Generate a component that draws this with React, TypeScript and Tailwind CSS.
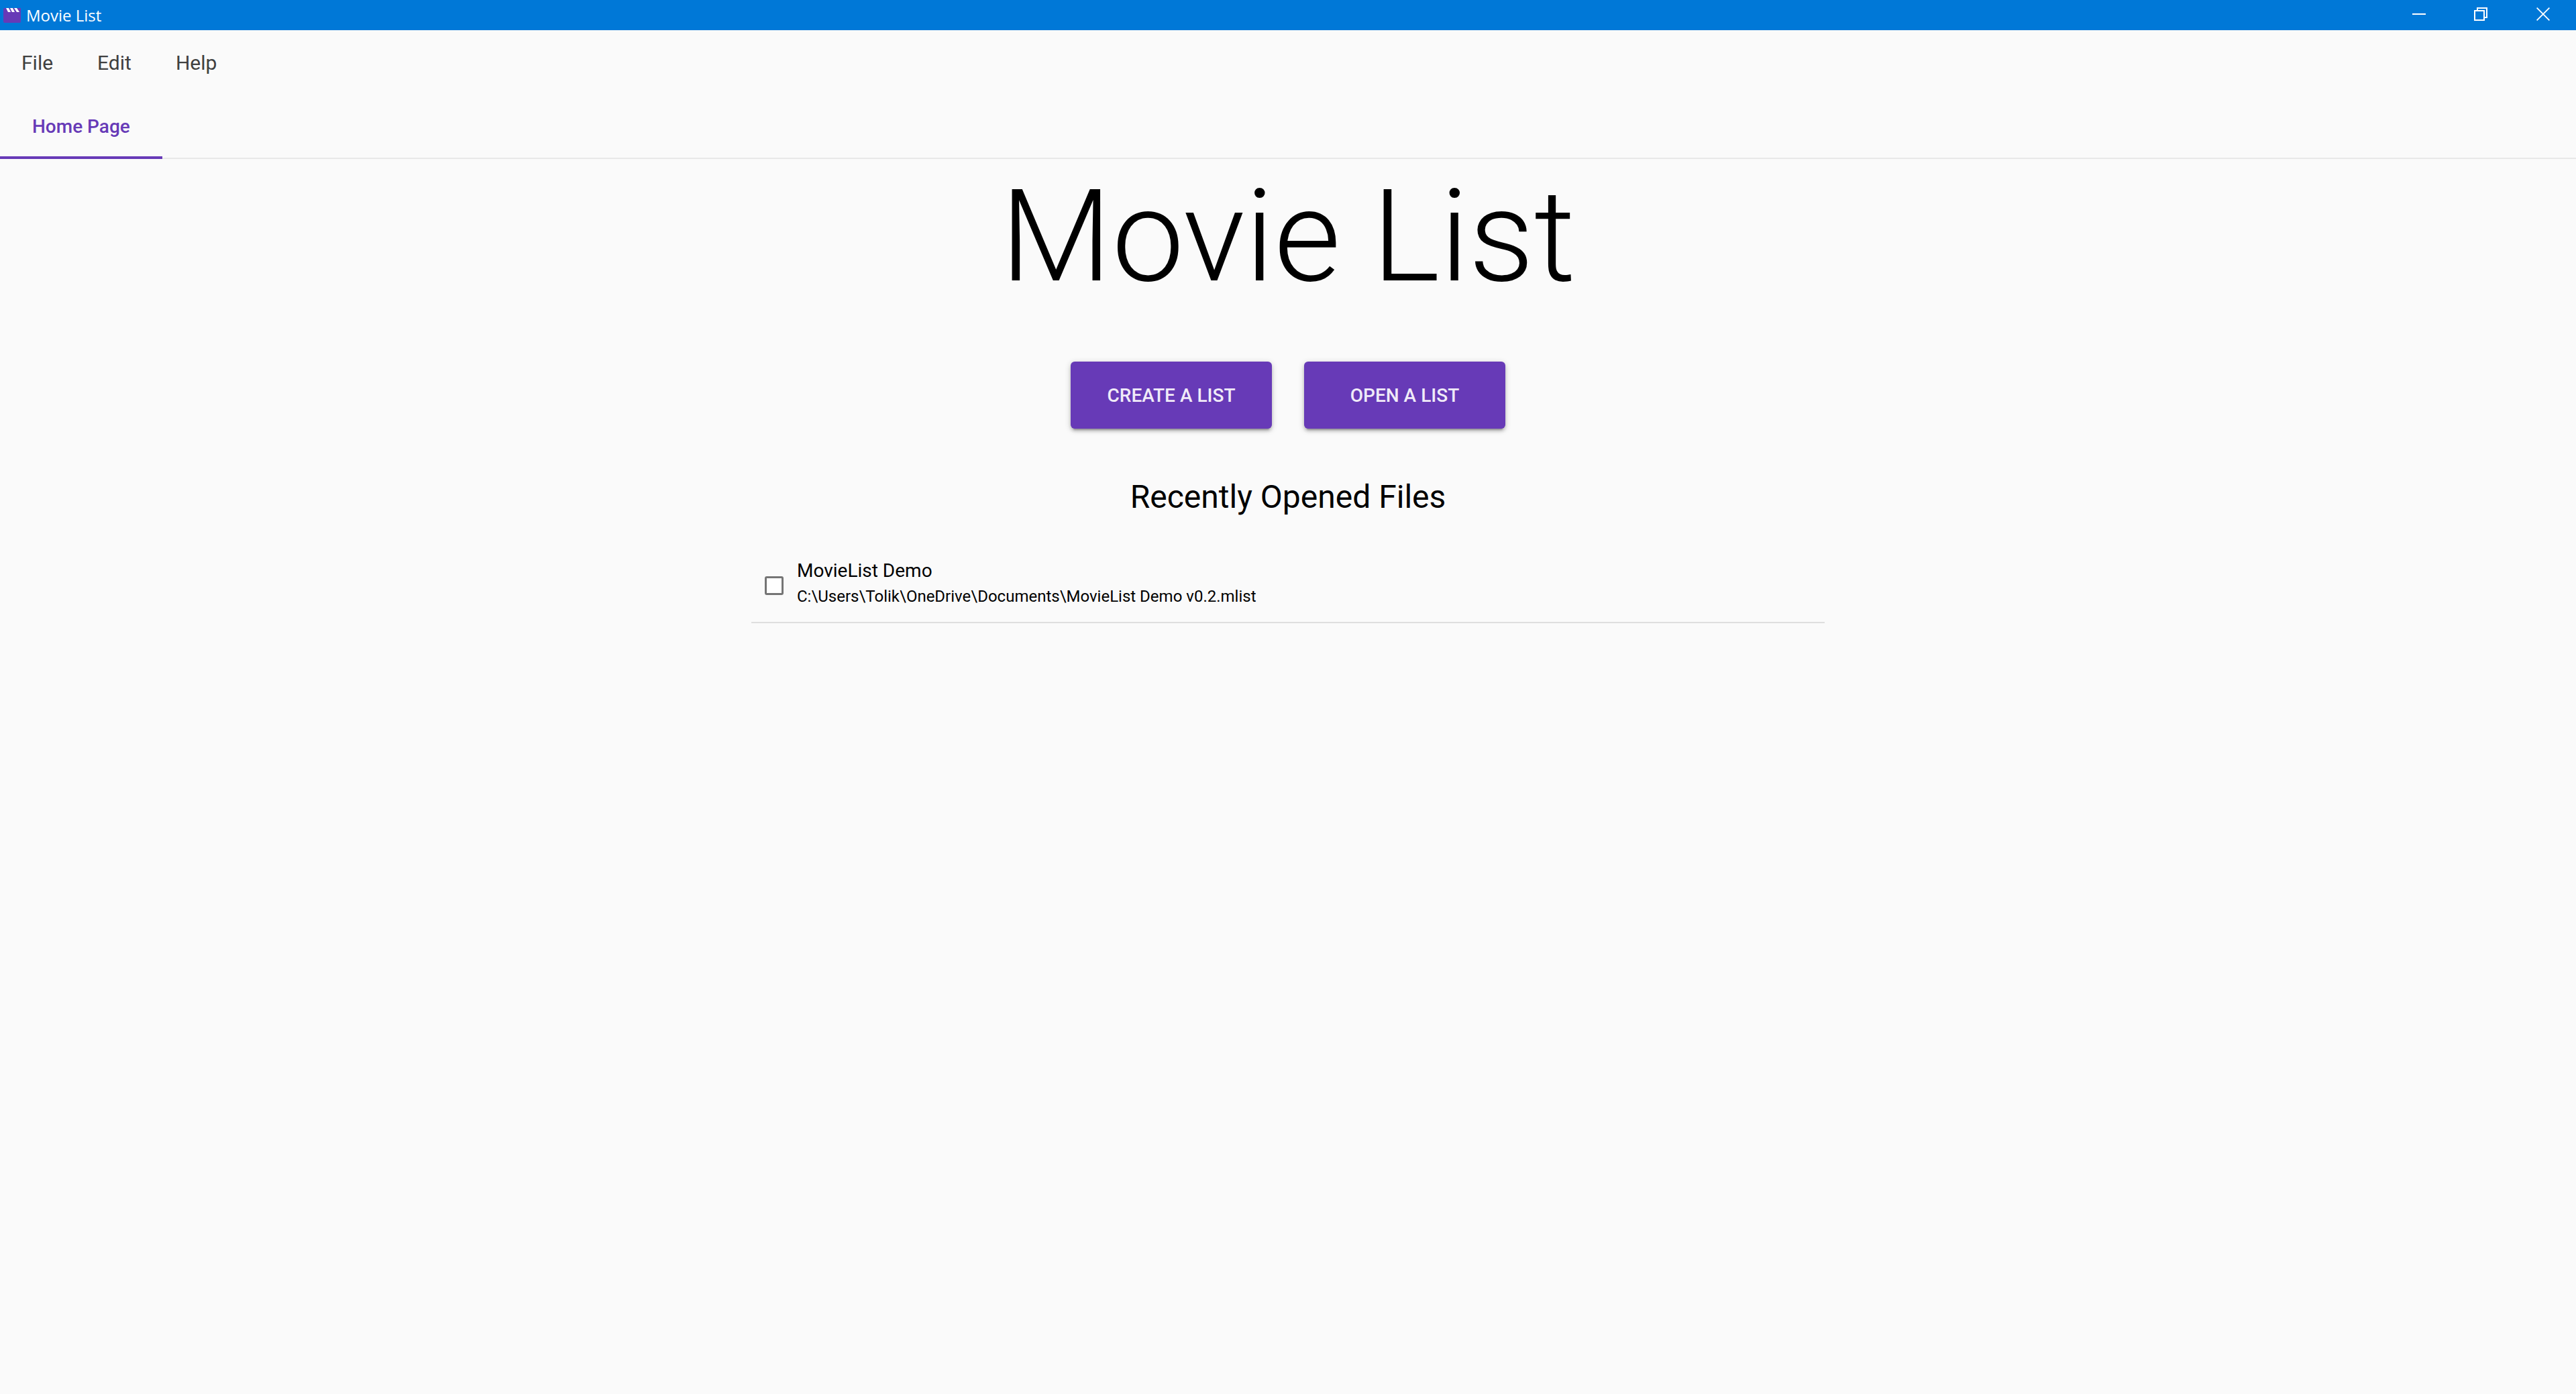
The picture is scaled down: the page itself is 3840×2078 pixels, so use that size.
import React from "react";

const menus = ["File", "Edit", "Help"];
const recentFiles = [
  { name: "MovieList Demo", path: "C:\\Users\\Tolik\\OneDrive\\Documents\\MovieList Demo v0.2.mlist" },
];

function TitleBar() {
  return (
    <header className="flex h-[45px] items-center justify-between bg-[#0078d7] text-white">
      <div className="flex items-center gap-2 pl-[5px] font-['Open_Sans',sans-serif] text-[24px] leading-[30px]">
        <svg width="26" height="22" viewBox="0 0 26 22" aria-hidden="true">
          <path fill="#673ab7" d="M0 1.5V20a2 2 0 0 0 2 2h22a2 2 0 0 0 2-2V0H2Q0 0 0 1.5z" />
          <path fill="#fff" d="M4 0h4l3 6H7zM10 0h4l3 6h-4zM16 0h4l4 6h-4z" />
        </svg>
        <span>Movie List</span>
      </div>
      <div className="flex h-[45px] pr-[2px] pb-[3px]">
        <button aria-label="Minimize" className="flex w-[92px] items-center justify-center">
          <svg width="20" height="20" viewBox="0 0 20 20"><path fill="#fff" d="M0 9h20v2H0z" /></svg>
        </button>
        <button aria-label="Restore" className="flex w-[92px] items-center justify-center">
          <svg width="20" height="20" viewBox="0 0 20 20" fill="none" stroke="#fff" strokeWidth="2">
            <path d="M1 5h14v14H1zM5 5V1h14v14h-4" />
          </svg>
        </button>
        <button aria-label="Close" className="flex w-[94px] items-center justify-center">
          <svg width="20" height="20" viewBox="0 0 20 20" fill="none" stroke="#fff" strokeWidth="1.8">
            <path d="M.6.6l18.8 18.8M19.4.6L.6 19.4" />
          </svg>
        </button>
      </div>
    </header>
  );
}

export default function App() {
  return (
    <div className="min-h-screen bg-[#fafafa] font-[Roboto,sans-serif] text-black">
      <TitleBar />
      <nav className="flex h-[96px] items-center gap-[2px] pt-[2px] text-[30px] leading-[36px] text-[#404040]">
        {menus.map((m) => (
          <button key={m} className="px-8">{m}</button>
        ))}
      </nav>
      <div role="tablist" className="flex h-[96px] border-b-2 border-[#e8e8e8]">
        <button
          role="tab"
          aria-selected="true"
          className="-mb-[2px] border-b-4 border-[#673ab7] px-12 pt-1 text-[28px] font-medium text-[#673ab7]"
        >
          Home Page
        </button>
      </div>
      <main className="flex flex-col items-center">
        <h1 className="text-[192px] leading-[232px] font-light">Movie List</h1>
        <div className="mt-[70px] flex gap-12">
          {["CREATE A LIST", "OPEN A LIST"].map((label) => (
            <button
              key={label}
              className="h-[100px] w-[300px] rounded-[6px] bg-[#673ab7] pt-[2px] text-[28px] font-medium text-white/90 shadow-[0_6px_2px_-4px_rgba(0,0,0,0.2),0_4px_4px_rgba(0,0,0,0.14),0_2px_10px_rgba(0,0,0,0.2)]"
            >
              {label}
            </button>
          ))}
        </div>
        <h2 className="mt-[74px] text-[48px] leading-[56px]">Recently Opened Files</h2>
        <ul className="mt-[42px] w-full max-w-[1600px]">
          {recentFiles.map((f) => (
            <li key={f.path} className="border-b-2 border-[#dedede]">
              <label className="flex items-center gap-5 pt-5 pb-3 pl-5">
                <input
                  type="checkbox"
                  className="size-7 shrink-0 appearance-none rounded-[3px] border-3 border-[#757575] bg-white checked:bg-[#673ab7]"
                />
                <span className="flex flex-col pb-2">
                  <span className="text-[28px] leading-[40px]">{f.name}</span>
                  <span className="text-[24px] leading-[36px]">{f.path}</span>
                </span>
              </label>
            </li>
          ))}
        </ul>
      </main>
    </div>
  );
}
